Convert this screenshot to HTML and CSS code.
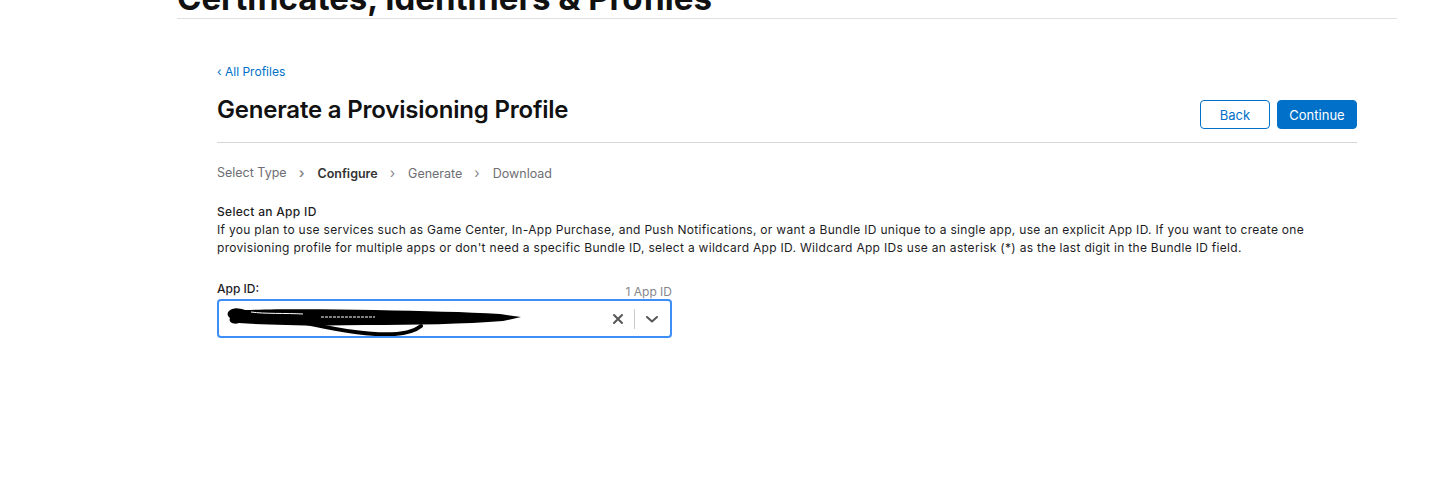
FILE: index.html
```html
<!DOCTYPE html>
<html lang="en">
<head>
    <meta charset="UTF-8">
    <title>Generate a Provisioning Profile</title>
    <link rel="stylesheet" href="styles.css">
</head>
<body>
    <div class="page">
        <header class="page-header">
            <h1>Certificates, Identifiers &amp; Profiles</h1>
        </header>

        <main class="content">
            <a class="back-link" href="#">&lsaquo; All Profiles</a>

            <div class="title-row">
                <h2>Generate a Provisioning Profile</h2>
                <div class="actions">
                    <button class="btn btn-outline">Back</button>
                    <button class="btn btn-primary">Continue</button>
                </div>
            </div>

            <ol class="steps">
                <li>Select Type</li>
                <li class="current">Configure</li>
                <li>Generate</li>
                <li>Download</li>
            </ol>

            <section class="intro">
                <h3>Select an App ID</h3>
                <p>If you plan to use services such as Game Center, In-App Purchase, and Push Notifications, or want a Bundle ID unique to a single app, use an explicit App ID. If you want to create one provisioning profile for multiple apps or don't need a specific Bundle ID, select a wildcard App ID. Wildcard App IDs use an asterisk (*) as the last digit in the Bundle ID field.</p>
            </section>

            <div class="field">
                <div class="field-head">
                    <label>App ID:</label>
                    <span class="count">1 App ID</span>
                </div>
                <div class="select">
                    <div class="select-value">
                        <!-- redacted value -->
                        <svg class="redact" width="300" height="35" viewBox="0 0 300 35">
                            <path d="M4 10 C8 6 14 7 20 9 C50 8 100 8 150 9 C200 10 240 11 275 13 L296 16 L278 20 C240 23 190 24 140 24 C90 25 40 24 14 22 C8 24 3 21 5 17 C2 15 2 12 4 10 Z" fill="#000"/>
                            <path d="M8 11 C30 15 70 12 110 16 C150 18 210 15 272 17" stroke="#000" stroke-width="6" fill="none"/>
                            <path d="M26 14 C70 17 95 27 130 31 C160 35 185 34 196 25" stroke="#000" stroke-width="4" fill="none" stroke-linecap="round"/>
                            <path d="M26 11 C40 13 60 12 78 13" stroke="#fff" stroke-width="1" fill="none"/>
                            <path d="M96 16 L150 16" stroke="#fff" stroke-width="1.2" stroke-dasharray="3 1"/>
                        </svg>
                    </div>
                    <span class="clear">
                        <svg width="12" height="12" viewBox="0 0 12 12"><path d="M2 2 L10 10 M10 2 L2 10" stroke="#555" stroke-width="2" stroke-linecap="round"/></svg>
                    </span>
                    <span class="sep"></span>
                    <span class="caret">
                        <svg width="14" height="10" viewBox="0 0 14 10"><path d="M2 3 L7 7.5 L12 3" stroke="#555" stroke-width="2" fill="none" stroke-linecap="round" stroke-linejoin="round"/></svg>
                    </span>
                </div>
            </div>
        </main>
    </div>
</body>
</html>
```

FILE: styles.css
```css
body {
    margin: 0;
    background: #fff;
    color: #1d1d1f;
    font-family: Inter, "Liberation Sans", sans-serif;
}
.page {
    width: 1220px;
    margin-left: 177px;
}
.page-header {
    height: 18px;
    border-bottom: 1px solid #e0e0e0;
    overflow: hidden;
}
.page-header h1 {
    margin: -21px 0 0;
    font-size: 33px;
    font-weight: 700;
    line-height: 38px;
    color: #111;
}
.content {
    padding: 45px 40px 0;
}
.back-link {
    display: block;
    font-size: 12px;
    line-height: 16px;
    color: #0070c9;
    text-decoration: none;
}
.title-row {
    display: flex;
    justify-content: space-between;
    align-items: flex-start;
    margin-top: 20px;
    padding-bottom: 13px;
    border-bottom: 1px solid #d6d6d6;
}
.title-row h2 {
    margin: -2px 0 0;
    font-size: 24px;
    line-height: 24px;
    font-weight: 600;
    letter-spacing: -0.2px;
    color: #111;
}
.actions {
    display: flex;
    gap: 7px;
}
.btn {
    height: 29px;
    font-family: inherit;
    font-size: 13px;
    border-radius: 4px;
    cursor: pointer;
}
.btn-outline {
    width: 70px;
    background: #fff;
    color: #0070c9;
    border: 1px solid #0070c9;
}
.btn-primary {
    width: 80px;
    background: #0070c9;
    color: #fff;
    border: 1px solid #0070c9;
}
.steps {
    display: flex;
    list-style: none;
    margin: 22px 0 0;
    padding: 0;
    font-size: 12.5px;
    line-height: 16px;
    color: #6e6e73;
}
.steps li + li::before {
    content: "\203A";
    margin: 0 13px 0 12px;
    font-size: 14px;
    color: #888;
}
.steps .current {
    font-weight: 600;
    color: #333;
}
.intro {
    margin-top: 21px;
    font-size: 12px;
    line-height: 18px;
    letter-spacing: 0.3px;
    color: #1d1d1f;
}
.intro h3 {
    margin: 0;
    font-size: 12px;
    font-weight: 500;
}
.intro p {
    margin: 0;
}
.field {
    width: 455px;
    margin-top: 24px;
}
.field-head {
    display: flex;
    justify-content: space-between;
    align-items: flex-end;
    font-size: 12px;
    line-height: 16px;
}
.field-head label {
    font-weight: 500;
    margin-bottom: 1px;
}
.count {
    color: #86868b;
    margin-bottom: -2px;
}
.select {
    display: flex;
    align-items: center;
    height: 35px;
    margin-top: 1px;
    border: 2px solid #3e8ef7;
    border-radius: 4px;
}
.select-value {
    flex: 1;
    padding-left: 6px;
    align-self: stretch;
}
.redact {
    display: block;
}
.clear {
    display: flex;
    padding: 0 10px;
}
.sep {
    width: 1px;
    height: 20px;
    background: #ccc;
}
.caret {
    display: flex;
    padding: 0 11px 0 10px;
}
```
